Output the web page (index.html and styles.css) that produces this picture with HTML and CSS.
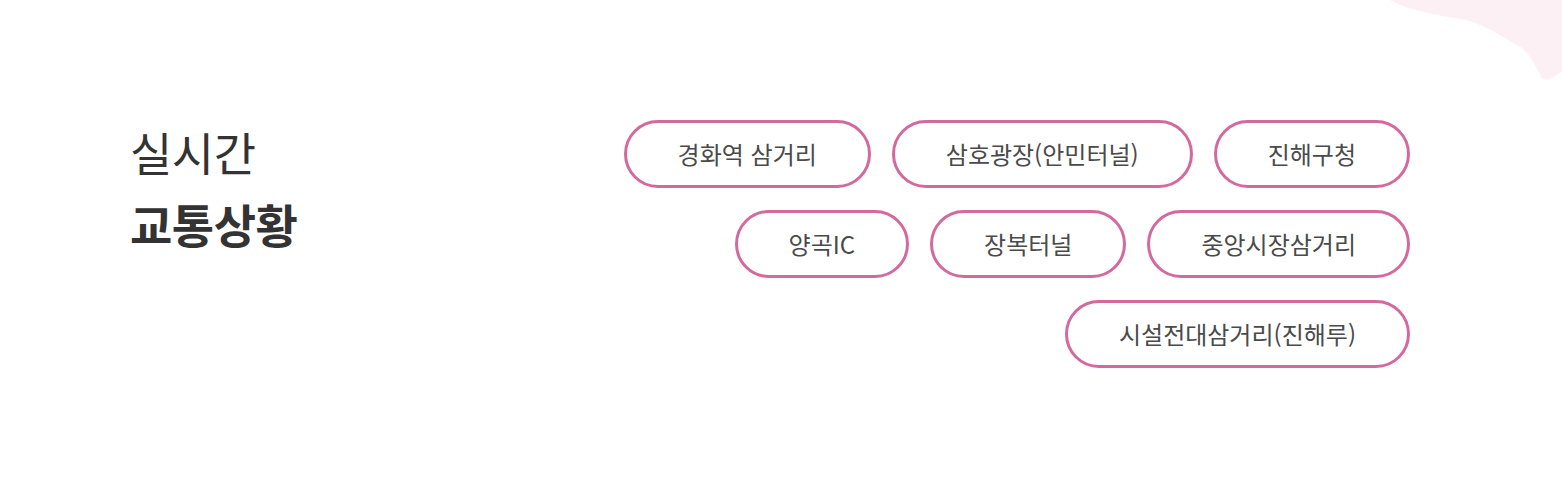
FILE: index.html
```html
<!DOCTYPE html>
<html lang="ko">
<head>
    <meta charset="UTF-8">
    <meta name="viewport" content="width=device-width, initial-scale=1.0">
    <title>실시간 교통상황</title>
    <link rel="stylesheet" href="styles.css">
</head>
<body>
    <section class="traffic">
        <!-- decorative blob in the corner -->
        <svg class="blob" width="180" height="82" viewBox="0 0 180 82">
            <path d="M8 0 C 30 12, 60 16, 85 20 C 110 28, 125 40, 140 48 C 150 56, 155 70, 160 78 C 164 82, 170 78, 180 72 L 180 0 Z" fill="#fcf0f5"/>
        </svg>

        <h2 class="traffic-title">
            <span class="light">실시간</span>
            <strong>교통상황</strong>
        </h2>

        <ul class="tag-list">
            <li><a href="#" class="tag">경화역 삼거리</a></li>
            <li><a href="#" class="tag">삼호광장(안민터널)</a></li>
            <li><a href="#" class="tag">진해구청</a></li>
            <li><a href="#" class="tag">양곡IC</a></li>
            <li><a href="#" class="tag">장복터널</a></li>
            <li><a href="#" class="tag">중앙시장삼거리</a></li>
            <li><a href="#" class="tag">시설전대삼거리(진해루)</a></li>
        </ul>
    </section>
</body>
</html>
```

FILE: styles.css
```css
:root {
    --text-color: #333333;
    --tag-text: #4a4a4a;
    --tag-border: #d4699d;
}

* {
    box-sizing: border-box;
}

body {
    margin: 0;
    background-color: white;
    color: var(--text-color);
    font-family: "Noto Sans CJK KR", "Noto Sans", sans-serif;
}

.traffic {
    position: relative;
    display: flex;
    align-items: flex-start;
    padding: 120px 152px 0 130px;
    min-height: 482px;
    overflow: hidden;
}

.blob {
    position: absolute;
    top: 0;
    right: 0;
}

.traffic-title {
    margin: -5px 0 0;
    font-size: 46px;
    line-height: 72px;
    letter-spacing: -0.5px;
}

.traffic-title span,
.traffic-title strong {
    display: block;
}

.traffic-title .light {
    font-weight: 400;
}

.traffic-title strong {
    font-weight: 700;
}

.tag-list {
    list-style: none;
    margin: 0 0 0 auto;
    padding: 0;
    width: 860px;
    display: flex;
    flex-wrap: wrap;
    justify-content: flex-end;
    gap: 22px 21px;
}

.tag {
    display: block;
    padding: 14px 51px;
    border: 3px solid var(--tag-border);
    border-radius: 34px;
    font-size: 24px;
    line-height: 34px;
    color: var(--tag-text);
    text-decoration: none;
    white-space: nowrap;
}
```
